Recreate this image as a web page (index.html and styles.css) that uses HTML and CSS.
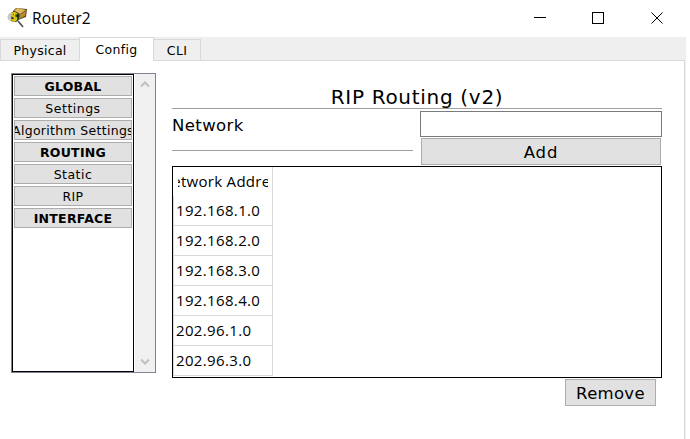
FILE: index.html
```html
<!DOCTYPE html>
<html lang="en">
<head>
<meta charset="utf-8">
<title>Router2</title>
<link rel="stylesheet" href="styles.css">
</head>
<body>
<div class="window">
  <header class="titlebar">
    <svg class="app-icon" width="21" height="21" viewBox="0 0 21 21">
      <path d="M6 4 9 1 20 2 19 10 11 13 6 9z" fill="#5b4317"/>
      <path d="M7 4 10 1 19 3 13 7z" fill="#dfb95c"/>
      <path d="M12 8 19 4 18 9 12 12z" fill="#b98a35"/>
      <path d="M11 14 16 20" stroke="#555" stroke-width="1.800"/>
      <ellipse cx="6.500" cy="10" rx="6" ry="5" fill="#c5cabf"/>
      <path d="M5 5 Q10 3 12.500 8 Q13 13 9 15 L4 14z" fill="#173d12"/>
      <path d="M10 7Q5.500 4.500 5 7.700Q5 9.500 7.500 9.800Q10.500 10.500 9 13Q7 14 4 12.500M7.500 5V15" fill="none" stroke="#e4c51b" stroke-width="1.700"/>
    </svg>
    <h1 class="window-title">Router2</h1>
    <svg class="controls" width="130" height="14" viewBox="0 0 130 14" fill="none" stroke="#000">
      <path d="M0 6.500H12"/>
      <rect x="58.500" y="1.500" width="11" height="11"/>
      <path d="M117.500 1.500 128.500 12.500M128.500 1.500 117.500 12.500"/>
    </svg>
  </header>
  <nav class="tabs">
    <div class="tab physical"><span>Physical</span></div>
    <div class="tab config"><span>Config</span></div>
    <div class="tab cli"><span>CLI</span></div>
    <div class="tab-fill"></div>
  </nav>
  <main class="page">
    <aside class="sidebar">
      <div class="list">
        <button class="item head">GLOBAL</button>
        <button class="item wide">Settings</button>
        <button class="item">Algorithm Settings</button>
        <button class="item head">ROUTING</button>
        <button class="item wide">Static</button>
        <button class="item">RIP</button>
        <button class="item head">INTERFACE</button>
      </div>
      <div class="scrollbar">
        <svg width="10" height="8" viewBox="0 0 10 8"><path d="M1 6.500 5 2.500 9 6.500" fill="none" stroke="#bfbfbf" stroke-width="2"/></svg>
        <svg width="10" height="8" viewBox="0 0 10 8"><path d="M1 1.500 5 5.500 9 1.500" fill="none" stroke="#bfbfbf" stroke-width="2"/></svg>
      </div>
    </aside>
    <section class="panel">
      <h2 class="heading">RIP Routing (v2)</h2>
      <div class="form">
        <label class="label" for="net">Network</label>
        <input class="field" id="net" type="text">
        <div class="rule"></div>
        <button class="button add">Add</button>
      </div>
      <div class="table">
        <div class="column">
          <div class="th"><span>Network Address</span></div>
          <div class="td">192.168.1.0</div>
          <div class="td">192.168.2.0</div>
          <div class="td">192.168.3.0</div>
          <div class="td">192.168.4.0</div>
          <div class="td">202.96.1.0</div>
          <div class="td">202.96.3.0</div>
        </div>
      </div>
      <button class="button remove">Remove</button>
    </section>
  </main>
</div>
</body>
</html>
```
FILE: styles.css
```css
* { box-sizing: border-box; }
body { margin: 0; background: #fff; color: #000; font-family: "DejaVu Sans", sans-serif; overflow: hidden; }
button { font-family: inherit; color: #000; padding: 0; margin: 0; border-radius: 0; }
.window { width: 690px; height: 439px; }
.titlebar { height: 37px; display: flex; align-items: flex-start; padding: 7px 0 0 7px; }
.window-title { margin: 0 0 0 4px; width: 497px; font: 400 15.5px/23px "Open Sans", sans-serif; letter-spacing: 0.15px; white-space: nowrap; }
.controls { margin-top: 4px; margin-left: 5px; }
.tabs { width: 686px; height: 24px; display: flex; align-items: flex-end; background: #efefef; }
.tab { height: 22px; border: 1px solid #d9d9d9; border-right: 0; display: flex; align-items: center; justify-content: center; font-size: 12.5px; letter-spacing: 0.3px; line-height: 20px; white-space: nowrap; }
.physical { width: 79px; padding-top: 2px; }
.config { width: 75px; height: 24px; background: #fff; border-right: 1px solid #d9d9d9; border-bottom: 0; }
.cli { width: 47px; border-left: 0; border-right: 1px solid #d9d9d9; padding-top: 2px; }
.tab-fill { flex: 1; height: 1px; background: #d9d9d9; margin-right: 1px; }
.page { width: 686px; height: 378px; display: flex; padding: 12px 0 0 11px; border-right: 1px solid #efefef; box-shadow: inset -1px 0 #d9d9d9; }
.sidebar { width: 145px; height: 300px; border: 1px solid #828290; display: flex; }
.list { width: 122px; height: 298px; border: 1px solid #000; padding: 1px; display: flex; flex-direction: column; gap: 2px; }
.item { flex: none; width: 118px; height: 20px; border: 1px solid #adadad; background: #e1e1e1; font-size: 12.5px; letter-spacing: 0.3px; line-height: 18px; padding-top: 1px; display: flex; justify-content: center; overflow: hidden; white-space: nowrap; }
.wide { letter-spacing: 0.5px; }
.head { font-weight: 700; font-size: 12.5px; letter-spacing: 0.25px; }
.scrollbar { width: 20px; margin-left: 1px; background: #f0f0f0; display: flex; flex-direction: column; justify-content: space-between; align-items: center; padding: 6px 0 6px; }
.panel { width: 490px; margin-left: 16px; padding-top: 11px; }
.heading { margin: 0; height: 25px; border-bottom: 1px solid #a0a0a0; text-align: center; font-size: 20px; letter-spacing: 0.7px; line-height: 26px; font-weight: 400; }
.form { display: grid; grid-template-columns: 241px 242px; column-gap: 7px; grid-template-rows: 26px 27px; row-gap: 1px; padding-top: 2px; }
.label { font-size: 16.5px; letter-spacing: 0.4px; line-height: 29px; }
.field { width: 242px; height: 26px; border: 1px solid #7a7a7a; background: #fff; border-radius: 0; outline: 0; }
.rule { height: 1px; margin-top: 12px; background: #a0a0a0; }
.button { border: 1px solid #adadad; background: #e1e1e1; font-size: 16.5px; letter-spacing: 0.3px; line-height: 27px; display: flex; justify-content: center; }
.add { width: 240px; height: 27px; margin-left: 1px; letter-spacing: 0.9px; }
.table { height: 212px; margin-top: 1px; border: 1px solid #000; }
.column { width: 100px; font-family: "Open Sans", sans-serif; font-size: 15px; border-right: 1px solid #d9d9d9; height: 209px; }
.th { height: 29px; margin: 0 4px 0 5px; line-height: 29px; letter-spacing: 0.3px; display: flex; justify-content: center; overflow: hidden; white-space: nowrap; }
.td { height: 30px; border-bottom: 1px solid #d9d9d9; border-left: 1px solid #d9d9d9; line-height: 29px; padding-left: 2px; letter-spacing: 0.35px; }
.remove { width: 91px; height: 27px; margin: 1px 0 0 393px; }
```
